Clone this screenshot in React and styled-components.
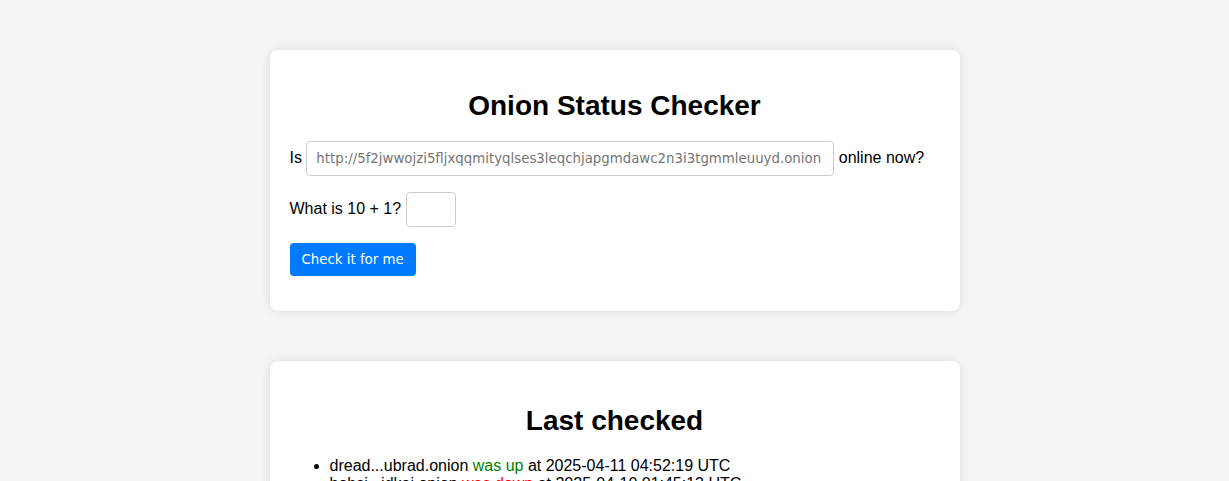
import React from "react";
import styled, { createGlobalStyle } from "styled-components";

const Global = createGlobalStyle`
  html, body { margin: 0; padding: 0; background: #f4f4f4; }
  body { font-family: "Liberation Sans", Arial, sans-serif; font-size: 16px; color: #000; }
`;

const Page = styled.div`
  display: flex;
  flex-direction: column;
  align-items: center;
  gap: 50px;
  padding-top: 50px;
  height: 481px;
  box-sizing: border-box;
  overflow: hidden;
`;

const Card = styled.section`
  width: 690px;
  box-sizing: border-box;
  padding: 20px 20px 35px;
  background: #fff;
  border-radius: 8px;
  box-shadow: 0 0 10px rgba(0, 0, 0, 0.1);
  flex-shrink: 0;
`;

const Title = styled.h1`
  font-size: 28px;
  font-weight: bold;
  text-align: center;
  line-height: 32.2px;
  margin: ${(p) => p.$top}px 0 ${(p) => p.$bottom}px;
`;

const Row = styled.div`
  display: flex;
  align-items: center;
  gap: 4.4px;
  margin-bottom: 16px;
`;

const Input = styled.input`
  box-sizing: border-box;
  width: ${(p) => p.$w}px;
  height: 35px;
  padding: 8px 9px;
  border: 1px solid #ccc;
  border-radius: 4px;
  font-family: "DejaVu Sans", sans-serif;
  font-size: 13.333px;
  outline: none;
  &::placeholder { color: #757575; }
`;

const Button = styled.button`
  height: 33px;
  padding: 0 12px;
  border: none;
  border-radius: 4px;
  background: #007bff;
  color: #fff;
  font-family: "DejaVu Sans", sans-serif;
  font-size: 13.333px;
  cursor: pointer;
`;

const List = styled.ul`
  margin: 0;
  padding-left: 40px;
  line-height: 18.4px;
`;

const Status = styled.span`
  color: ${(p) => (p.$up ? "#008000" : "#ff0000")};
`;

const items = [
  { name: "dread...ubrad.onion", up: true, at: "2025-04-11 04:52:19 UTC" },
  { name: "bohsi...idkai.onion", up: false, at: "2025-04-10 01:45:13 UTC" },
];

export default function App() {
  return (
    <>
      <Global />
      <Page>
        <Card>
          <Title $top={19.7} $bottom={19}>Onion Status Checker</Title>
          <Row>
            Is
            <Input
              $w={528}
              placeholder="http://5f2jwwojzi5fljxqqmityqlses3leqchjapgmdawc2n3i3tgmmleuuyd.onion"
            />
            online now?
          </Row>
          <Row>
            What is 10 + 1?
            <Input $w={50} />
          </Row>
          <Button>Check it for me</Button>
        </Card>
        <Card>
          <Title $top={23.7} $bottom={20}>Last checked</Title>
          <List>
            {items.map((it) => (
              <li key={it.name}>
                {it.name} <Status $up={it.up}>{it.up ? "was up" : "was down"}</Status> at {it.at}
              </li>
            ))}
          </List>
        </Card>
      </Page>
    </>
  );
}
